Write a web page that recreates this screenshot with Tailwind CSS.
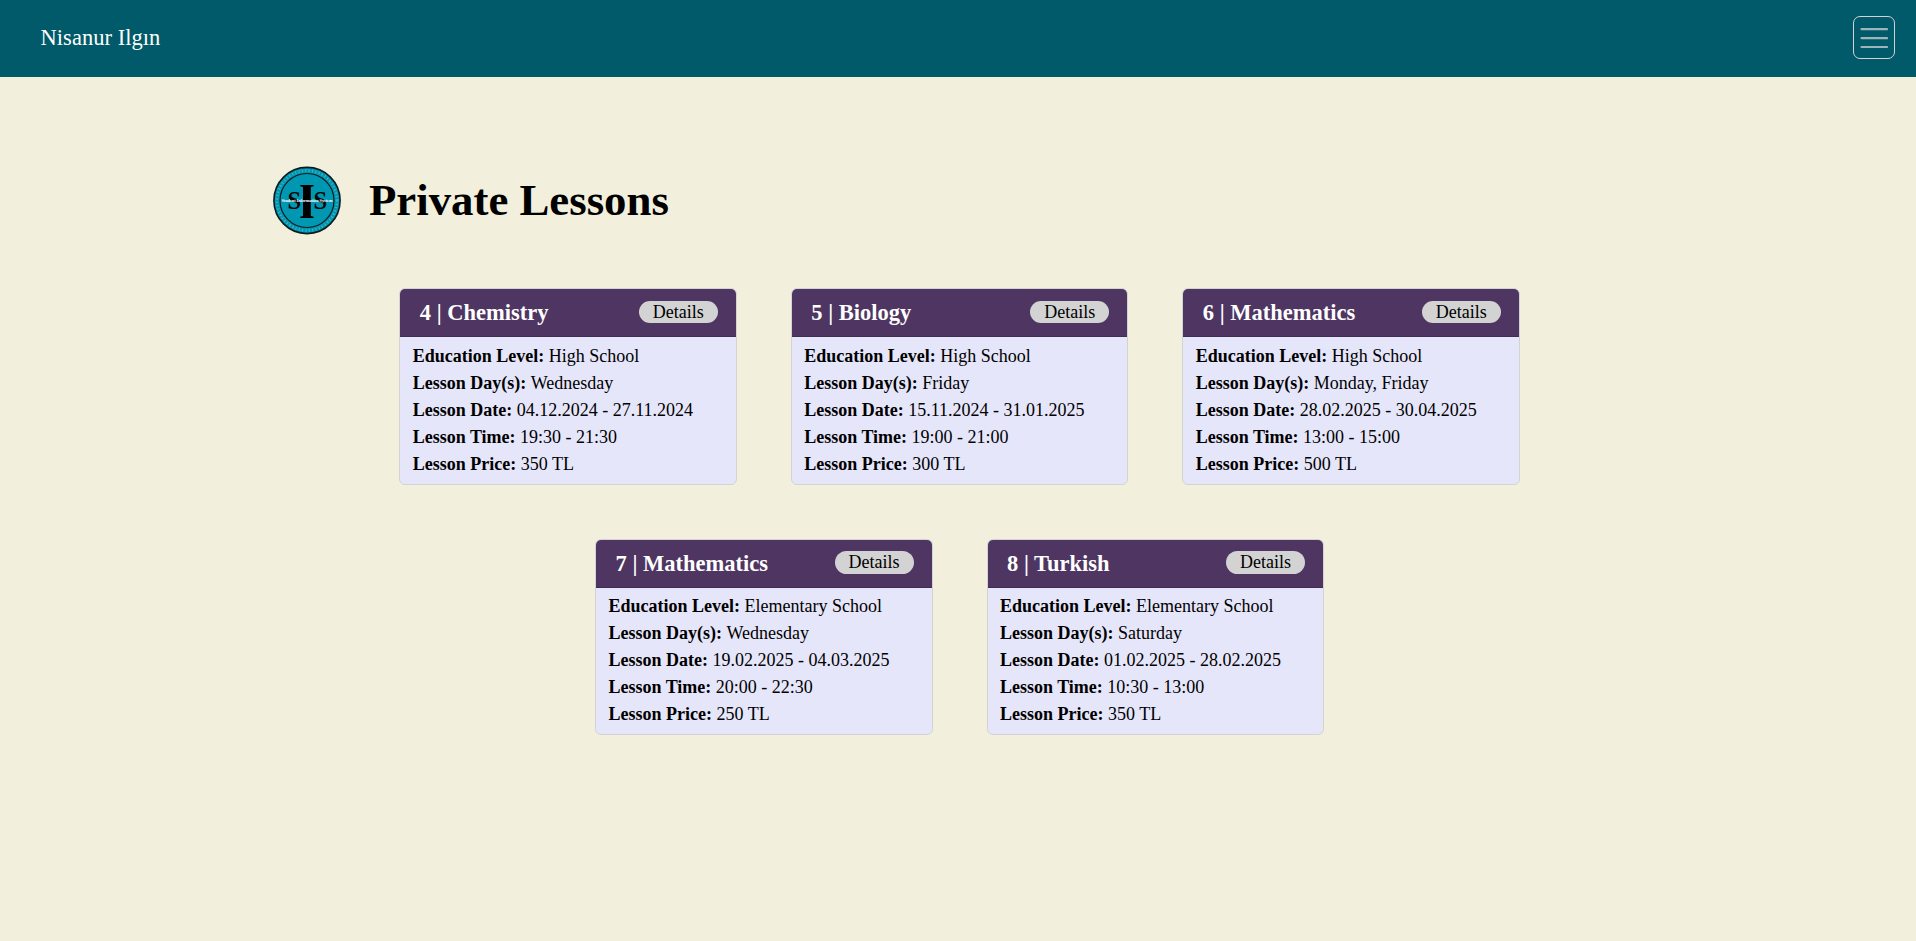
<!DOCTYPE html>
<html lang="en">
<head>
<meta charset="utf-8">
<title>Private Lessons</title>
<script src="https://cdn.jsdelivr.net/npm/@tailwindcss/browser@4"></script>
</head>
<body class="min-h-screen bg-[#f2efdc] font-['Liberation_Serif','Times_New_Roman',serif] text-[18px] leading-[27px] text-black">
<nav class="flex h-[77px] items-center justify-between bg-[#005a6a] pr-[21px] pl-[40.5px]">
  <a class="pb-[1px] text-[22.5px] leading-[34px] tracking-[0.04px] text-white">Nisanur Ilgın</a>
  <button class="mb-[2px] flex h-[43px] w-[42px] items-center justify-center rounded-[7px] border border-[#d3d3d3]" aria-label="Menu">
    <svg width="28" height="28" viewBox="0 0 28 28" fill="none" stroke="#d3d3d3" stroke-opacity=".75" stroke-width="2.2" stroke-linecap="round"><path d="M1.5 5.2h25.5M1.5 14.1h25.5M1.5 23h25.5"/></svg>
  </button>
</nav>
<main>
  <header class="flex items-center gap-[27px] pt-[89px] pl-[272px]">
    <svg class="shrink-0" width="70" height="69" viewBox="0 0 70 69">
      <circle cx="35" cy="34.5" r="33.1" fill="#0097b2" stroke="#0b1a20" stroke-width="1.6"/>
      <circle cx="35" cy="34.5" r="30" fill="none" stroke="#8fd0dc" stroke-opacity=".5" stroke-width="2.6" stroke-dasharray="1 2.4"/>
      <circle cx="35" cy="34.5" r="27" fill="none" stroke="#0b1a20" stroke-width="1.2"/>
      <g fill="#050505" font-family="Liberation Serif" font-weight="700" text-anchor="middle">
        <text x="22.3" y="42.8" font-size="24.5">S</text>
        <text x="48.2" y="42.8" font-size="24.5">S</text>
      </g>
      <path fill="#000" d="M28.2 19h13.4v1.2l-2.8.8v29l2.8.8V52H28.2v-1.2l2.8-.8V21l-2.8-.8z"/>
      <text x="35" y="35.9" font-family="Liberation Serif" font-weight="700" font-size="4.3" fill="#fff" text-anchor="middle" textLength="51">Student Information System</text>
    </svg>
    <h1 class="pb-[2px] text-[44.8px] leading-[54px] font-bold">Private Lessons</h1>
  </header>
  <section id="lessons" class="mt-[53.3px] ml-[353px] flex w-[1213px] flex-wrap justify-center gap-x-[54px] gap-y-[54px]"></section>
</main>
<template id="lesson">
  <article class="h-[196.6px] w-[337.5px] overflow-hidden rounded-[6px] border border-[#d3d3d3] bg-[#e6e6fa]">
    <div class="flex h-[48px] items-center justify-between border-b border-[#432b58] bg-[#4e3562] pr-[18px] pl-[19.5px]">
      <h2 class="text-[22.5px] leading-[27px] font-bold text-white"></h2>
      <button class="mb-[1.6px] h-[22.6px] w-[79px] rounded-full bg-[#d3d3d3] leading-[22.4px]">Details</button>
    </div>
    <dl class="px-[12.5px] pt-[5.5px]"></dl>
  </article>
</template>
<script>
const labels = ['Education Level:', 'Lesson Day(s):', 'Lesson Date:', 'Lesson Time:', 'Lesson Price:'];
const lessons = [
  ['4 | Chemistry', 'High School', 'Wednesday', '04.12.2024 - 27.11.2024', '19:30 - 21:30', '350 TL'],
  ['5 | Biology', 'High School', 'Friday', '15.11.2024 - 31.01.2025', '19:00 - 21:00', '300 TL'],
  ['6 | Mathematics', 'High School', 'Monday, Friday', '28.02.2025 - 30.04.2025', '13:00 - 15:00', '500 TL'],
  ['7 | Mathematics', 'Elementary School', 'Wednesday', '19.02.2025 - 04.03.2025', '20:00 - 22:30', '250 TL'],
  ['8 | Turkish', 'Elementary School', 'Saturday', '01.02.2025 - 28.02.2025', '10:30 - 13:00', '350 TL'],
];
const list = document.getElementById('lessons');
for (const [title, ...values] of lessons) {
  const card = document.getElementById('lesson').content.cloneNode(true);
  card.querySelector('h2').textContent = title;
  card.querySelector('dl').innerHTML = values.map((v, i) => `<div><dt class="inline font-bold">${labels[i]}</dt> <dd class="inline">${v}</dd></div>`).join('');
  list.append(card);
}
</script>
</body>
</html>
